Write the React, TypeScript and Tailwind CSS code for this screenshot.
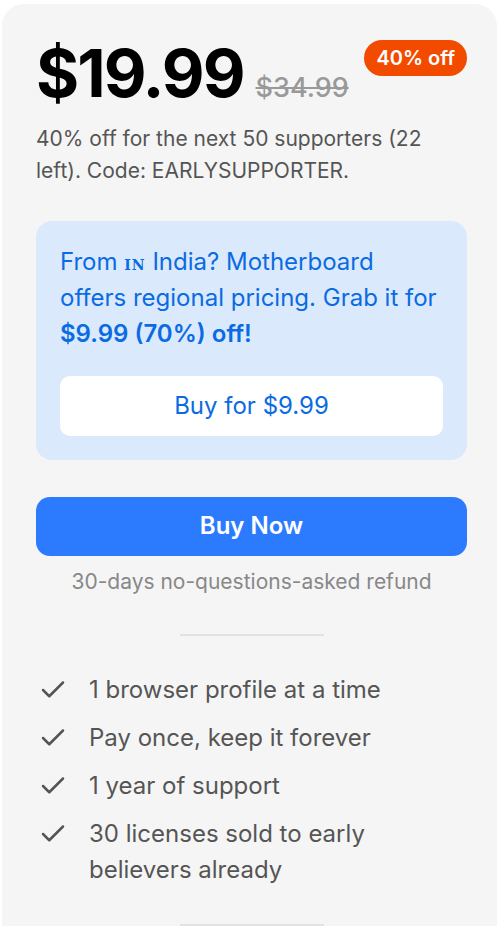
import { Check } from "lucide-react"

const features = [
    "1 browser profile at a time",
    "Pay once, keep it forever",
    "1 year of support",
    "30 licenses sold to early believers already",
]

const App = () => {
    return (
        <div className="min-h-[926px] bg-white px-[2px] pt-[4px] font-['Inter',sans-serif]">
            <div className="w-[495px] rounded-t-[22px] bg-[#f5f5f5] pl-[34px] pr-[30px] pt-[36px] pb-[40px]">
                <div className="flex items-start justify-between">
                    <div className="flex items-baseline gap-[12px]">
                        <span className="text-[66px] font-bold leading-none tracking-[-2px] text-black">$19.99</span>
                        <span className="text-[27px] font-medium text-[#999999] line-through">$34.99</span>
                    </div>
                    <span className="rounded-full bg-[#f24b00] px-[12px] py-[3px] text-[20px] font-semibold text-white">40% off</span>
                </div>
                <p className="mt-[14px] text-[21px] leading-[32px] text-[#555555]">
                    40% off for the next 50 supporters (22 left). Code: EARLYSUPPORTER.
                </p>

                <div className="mt-[34px] rounded-[16px] bg-[#dbe9fd] px-[24px] pt-[23px] pb-[24px]">
                    <p className="text-[24px] leading-[36px] text-[#0a6be3]">
                        From <span className="font-['DejaVu_Serif',serif] text-[14px] leading-none font-semibold tracking-[1px]">IN</span> India? Motherboard offers regional pricing. Grab it for <span className="font-semibold">$9.99 (70%) off!</span>
                    </p>
                    <button className="mt-[24px] flex h-[60px] w-full items-center justify-center rounded-[10px] bg-white text-[24px] text-[#0a6be3]">
                        Buy for $9.99
                    </button>
                </div>

                <button className="mt-[37px] flex h-[59px] w-full items-center justify-center rounded-[14px] bg-[#2c7bff] text-[24px] font-semibold text-white">
                    Buy Now
                </button>
                <p className="mt-[12px] text-center text-[21px] leading-[28px] text-[#888888]">30-days no-questions-asked refund</p>

                <div className="mx-auto mt-[38px] h-[2px] w-[144px] bg-[#e2e2e2]" />

                <ul className="mt-[36px] flex flex-col gap-[12px]">
                    {features.map((f, idx) => (
                        <li key={idx} className="flex items-start gap-[21px] text-[24px] leading-[36px] text-[#555555]">
                            <Check className="mt-[3px] ml-[2px] h-[30px] w-[30px] shrink-0" strokeWidth={2} />
                            <span className="w-[300px]">{f}</span>
                        </li>
                    ))}
                </ul>

                <div className="mx-auto mt-[36px] h-[2px] w-[144px] bg-[#e2e2e2]" />
            </div>
        </div>
    )
}

export default App
